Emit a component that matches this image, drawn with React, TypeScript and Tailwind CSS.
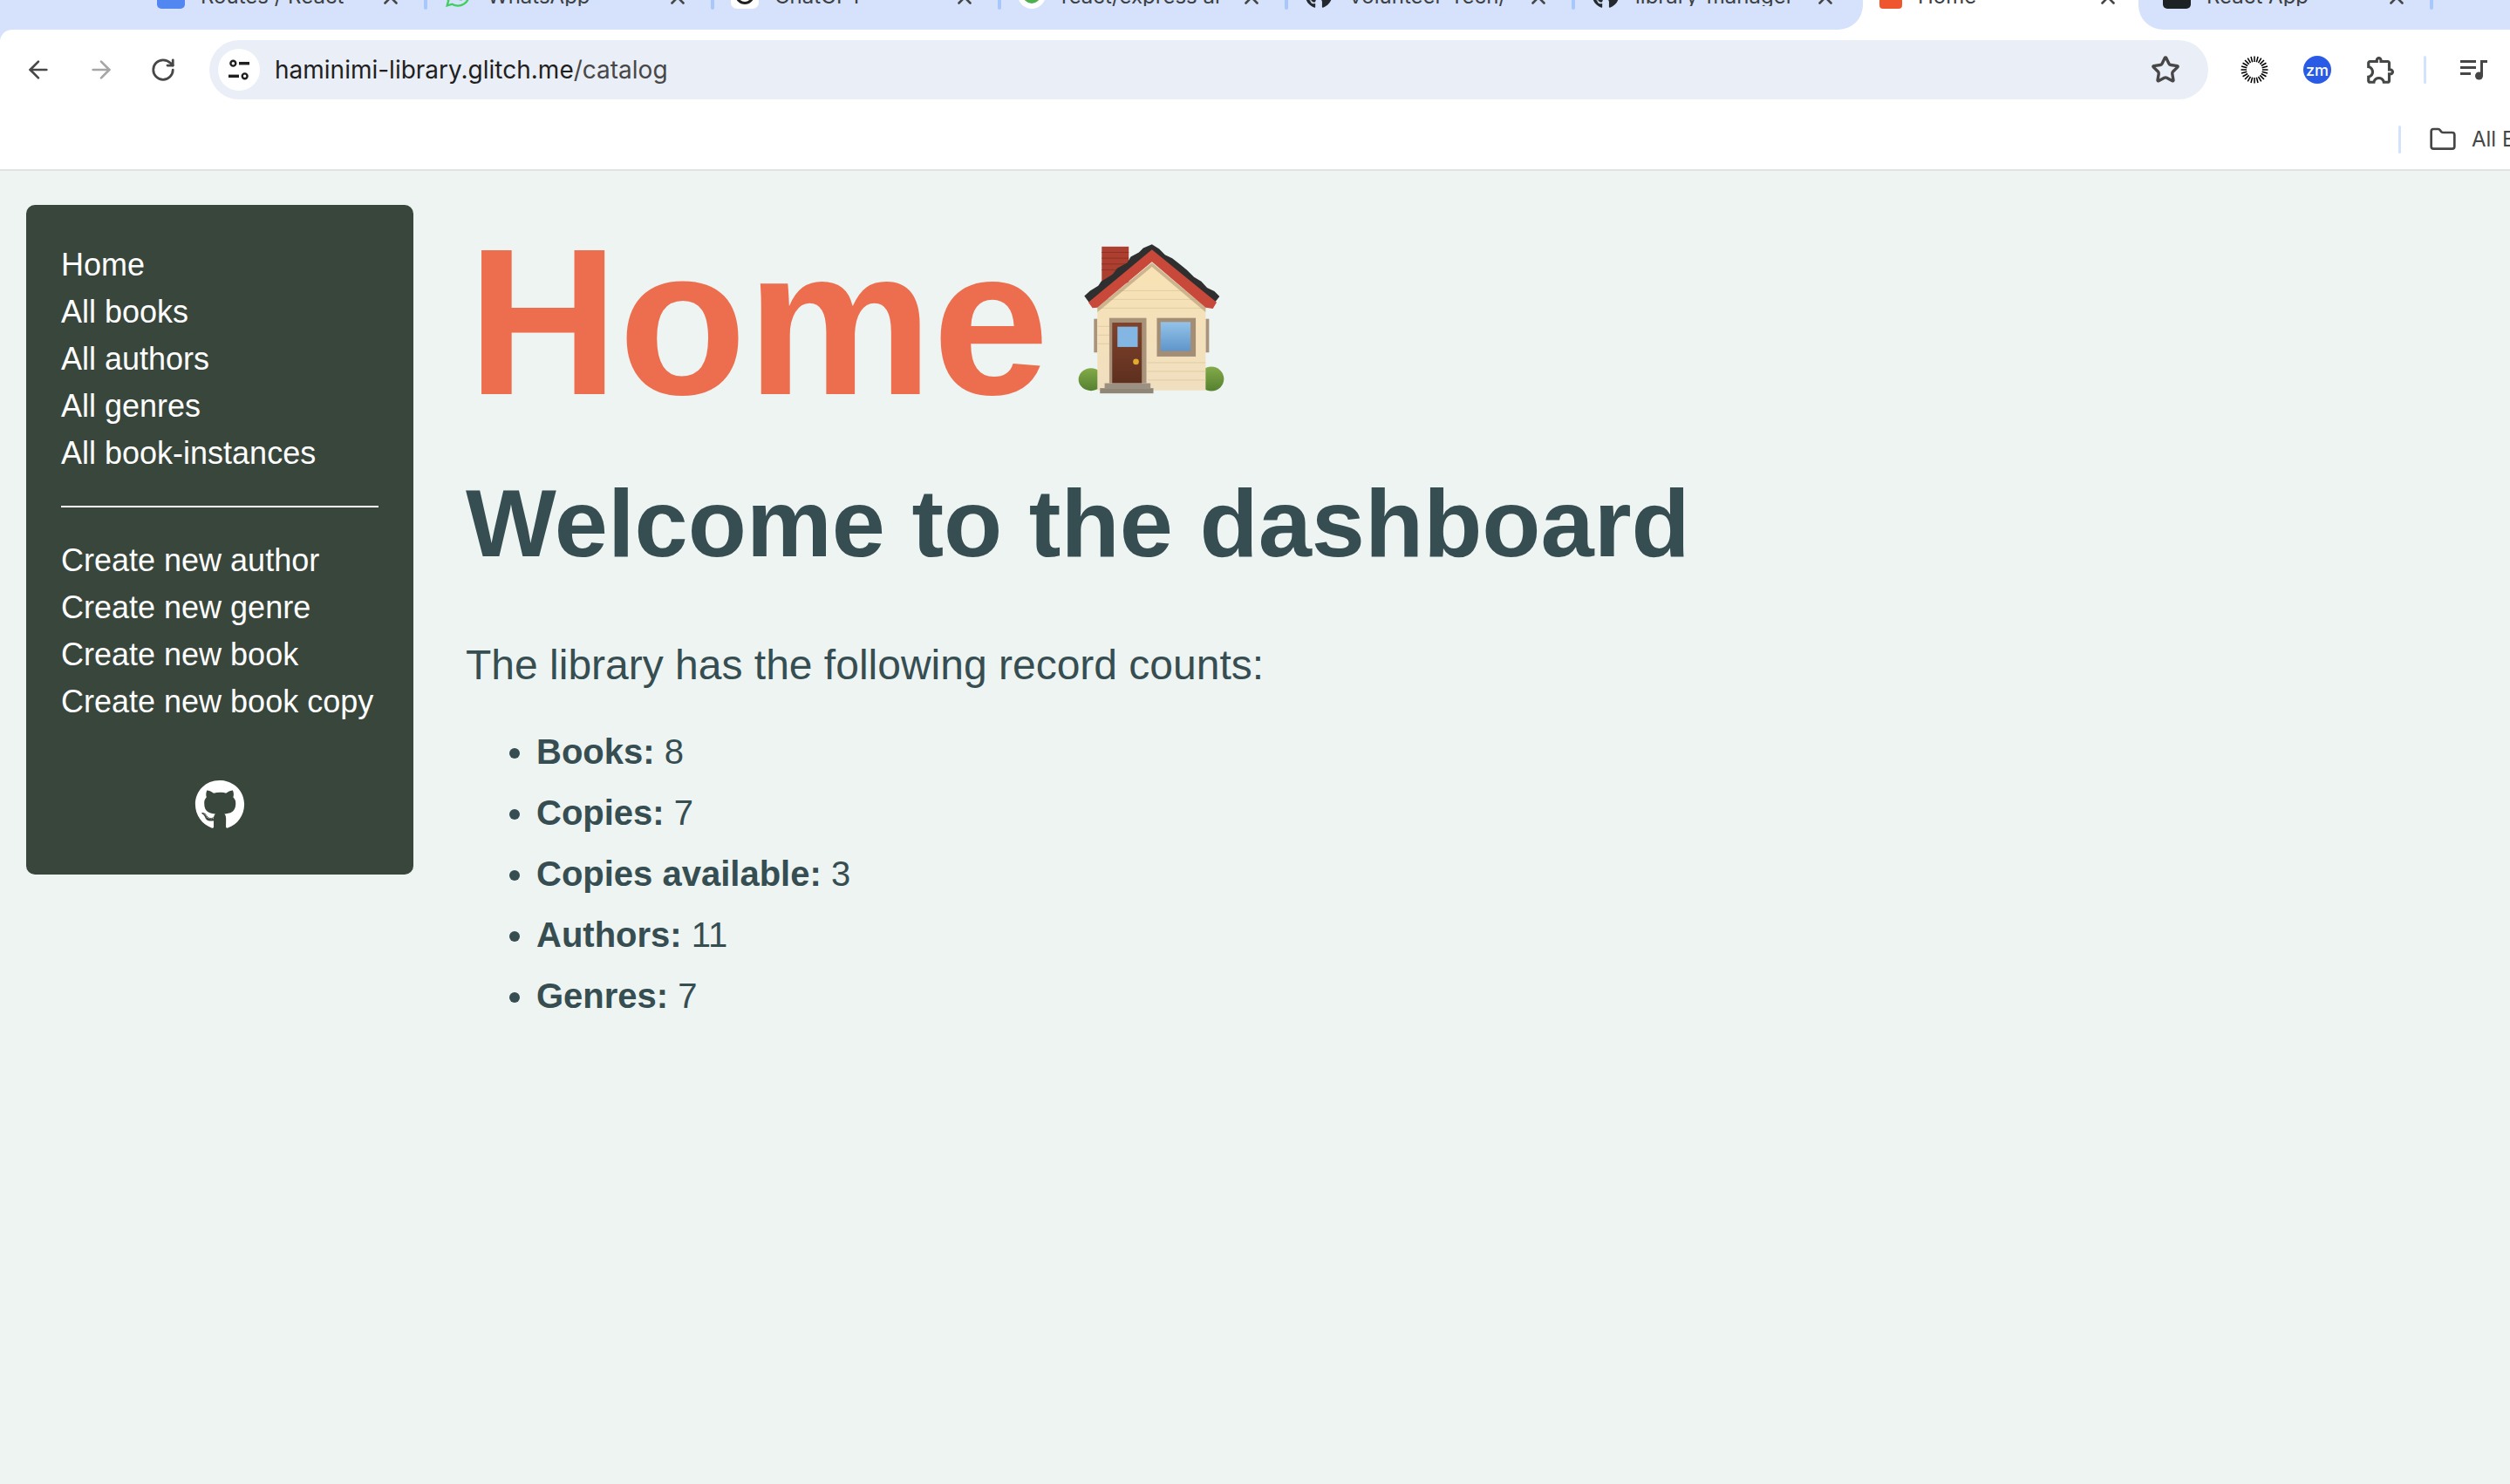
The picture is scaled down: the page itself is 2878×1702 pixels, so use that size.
import { ArrowLeft, ArrowRight, ChevronDown, Folder, RotateCw, Star, X } from "lucide-react";
import { FaGithub, FaWhatsapp } from "react-icons/fa";

const sans = "font-['Liberation_Sans',Arial,sans-serif]";
const ui = "font-['Inter','Liberation_Sans',sans-serif]";

const navMain = ["Home", "All books", "All authors", "All genres", "All book-instances"];
const navCreate = ["Create new author", "Create new genre", "Create new book", "Create new book copy"];

const counts = [
  { label: "Books:", value: 8 },
  { label: "Copies:", value: 7 },
  { label: "Copies available:", value: 3 },
  { label: "Authors:", value: 11 },
  { label: "Genres:", value: 7 },
];

function Favicon({ kind }: { kind: string }) {
  if (kind === "docs") return <div className="h-[32px] w-[32px] flex-none rounded-[5px] bg-[#5286f0]" />;
  if (kind === "whatsapp") return <FaWhatsapp className="h-[32px] w-[32px] flex-none text-[#3fcf5c]" />;
  if (kind === "chatgpt")
    return (
      <div className="flex h-[32px] w-[32px] flex-none items-center justify-center rounded-[7px] bg-white">
        <div className="h-[22px] w-[22px] rounded-full border-[3px] border-[#222]" />
      </div>
    );
  if (kind === "google")
    return (
      <div className="flex h-[32px] w-[32px] flex-none items-center justify-center rounded-full bg-white">
        <div className="h-[20px] w-[20px] rounded-full border-[5px] border-[#4caf50]" />
      </div>
    );
  if (kind === "github") return <FaGithub className="h-[32px] w-[32px] flex-none text-[#24292e]" />;
  if (kind === "home") return <div className="h-[32px] w-[26px] flex-none rounded-[4px] bg-[#ef5630]" />;
  return (
    <div className="flex h-[32px] w-[32px] flex-none items-center justify-center rounded-[5px] bg-[#1d2224]">
      <div className="h-[12px] w-[22px] rounded-full border-[2px] border-[#61dafb]" />
    </div>
  );
}

function Tab({ kind, title }: { kind: string; title: string }) {
  return (
    <div className="flex h-[11px] w-[325px] flex-none items-end overflow-hidden pl-[19px]">
      <div className="mb-[1px] flex flex-none items-end">
        <Favicon kind={kind} />
        <span className={`mb-[3px] ml-[18px] w-[205px] overflow-hidden text-[24px] leading-[22px] whitespace-nowrap text-[#3c4043] ${ui}`}>
          {title}
        </span>
        <X className="h-[26px] w-[26px] flex-none text-[#444746]" strokeWidth={2.4} />
      </div>
    </div>
  );
}

function Separator() {
  return <div className="h-[11px] w-[4px] flex-none rounded-b-[2px] bg-[#a8c7fa]" />;
}

function TuneIcon() {
  return (
    <svg viewBox="0 0 24 24" className="h-[32px] w-[32px] text-[#1f1f1f]" fill="none" stroke="currentColor">
      <circle cx="7" cy="6.5" r="2.2" strokeWidth="1.8" />
      <path d="M12 6.5h9" strokeWidth="2.6" />
      <path d="M3 17.5h9" strokeWidth="2.6" />
      <circle cx="17" cy="17.5" r="2.2" strokeWidth="1.8" />
    </svg>
  );
}

function SpokeIcon() {
  const spokes = Array.from({ length: 24 }, (_, i) => (i * 360) / 24);
  return (
    <svg viewBox="0 0 32 32" className="h-[32px] w-[32px]">
      {spokes.map((deg) => (
        <line key={deg} x1="16" y1="0.5" x2="16" y2="7" stroke="#000" strokeWidth="1.5" transform={`rotate(${deg} 16 16)`} />
      ))}
    </svg>
  );
}

function PuzzleIcon() {
  return (
    <svg viewBox="0 0 24 24" className="h-[38px] w-[38px] text-[#444746]" fill="currentColor">
      <path d="M10.5 4.5c.28 0 .5.22.5.5v2h6v6h2c.28 0 .5.22.5.5s-.22.5-.5.5h-2v6h-2.12c-.68-1.75-2.39-3-4.38-3s-3.7 1.25-4.38 3H4v-2.12c1.75-.68 3-2.39 3-4.38 0-1.99-1.24-3.7-2.99-4.38L4 7h6V5c0-.28.22-.5.5-.5m0-2C9.12 2.5 8 3.62 8 5H4c-1.1 0-1.99.9-1.99 2v3.8h.29c1.49 0 2.7 1.21 2.7 2.7s-1.21 2.7-2.7 2.7H2V20c0 1.1.9 2 2 2h3.8v-.3c0-1.49 1.21-2.7 2.7-2.7s2.7 1.21 2.7 2.7v.3H17c1.1 0 2-.9 2-2v-4c1.38 0 2.5-1.12 2.5-2.5S20.38 11 19 11V7c0-1.1-.9-2-2-2h-4c0-1.38-1.12-2.5-2.5-2.5z" />
    </svg>
  );
}

function QueueIcon() {
  return (
    <svg viewBox="0 0 32 24" className="h-[24px] w-[32px] text-[#444746]" fill="currentColor">
      <rect x="0" y="1" width="18" height="3" />
      <rect x="0" y="8" width="18" height="3" />
      <rect x="0" y="15" width="12" height="3" />
      <rect x="23" y="1" width="3" height="18" />
      <rect x="23" y="1" width="8" height="3" />
      <circle cx="21.5" cy="19" r="4.5" />
    </svg>
  );
}

function HouseEmoji() {
  return (
    <svg viewBox="80 60 505 520" className="h-[174px] w-[168px] flex-none">
      <defs>
        <linearGradient id="wall" x1="0" y1="0" x2="0" y2="1">
          <stop offset="0" stopColor="#f8e2b4" />
          <stop offset="1" stopColor="#f0dfc0" />
        </linearGradient>
        <linearGradient id="door" x1="0" y1="0" x2="0" y2="1">
          <stop offset="0" stopColor="#80432b" />
          <stop offset="1" stopColor="#5e2f1f" />
        </linearGradient>
        <linearGradient id="glass" x1="0" y1="0" x2="0" y2="1">
          <stop offset="0" stopColor="#93c3e9" />
          <stop offset="1" stopColor="#5f95ca" />
        </linearGradient>
        <linearGradient id="leaf" x1="0" y1="0" x2="0" y2="1">
          <stop offset="0" stopColor="#83ab4a" />
          <stop offset="1" stopColor="#55802f" />
        </linearGradient>
      </defs>
      <rect x="162" y="70" width="93" height="125" fill="#ad3f30" />
      <path d="M162 90h93M162 110h93M162 130h93M162 150h60" stroke="#8f3125" strokeWidth="3" />
      <path d="M102 240 L122 222 L150 205 L160 190 L200 165 L215 145 L250 125 L262 105 L290 90 L305 75 L335 62 L360 78 L380 98 L405 110 L430 130 L455 150 L480 175 L505 190 L525 212 L550 224 L568 242 L552 262 L335 100 L118 262 Z" fill="#2f2f2f" />
      <ellipse cx="125" cy="528" rx="43" ry="39" fill="url(#leaf)" />
      <ellipse cx="540" cy="526" rx="43" ry="42" fill="url(#leaf)" />
      <rect x="135" y="319" width="12" height="116" fill="#a9937a" />
      <rect x="520" y="319" width="12" height="116" fill="#a9937a" />
      <path d="M147 280 L335 125 L520 280 L520 566 L147 566 Z" fill="url(#wall)" />
      <path d="M215 222H455M180 252H490M148 282H520M148 345H188M148 375H188M148 405H188M320 470H520M320 500H520M320 530H520" stroke="#e2cda1" strokeWidth="3" />
      <path d="M147 280 L335 125 L520 280 L520 296 L335 140 L147 296 Z" fill="#a98f6d" opacity="0.55" />
      <path d="M116 262 L335 80 L558 262 L545 284 L520 280 L335 122 L147 280 L130 282 Z" fill="#c8483a" />
      <rect x="188" y="316" width="128" height="225" fill="#a8927a" />
      <rect x="198" y="332" width="102" height="209" fill="url(#door)" />
      <rect x="216" y="346" width="70" height="70" fill="#83b6e2" />
      <circle cx="280" cy="467" r="10" fill="#e2ab2d" />
      <rect x="352" y="316" width="134" height="133" fill="#a38d75" />
      <rect x="365" y="330" width="103" height="100" fill="url(#glass)" />
      <rect x="172" y="541" width="158" height="17" fill="#9b9082" />
      <rect x="156" y="558" width="184" height="18" fill="#8f8678" />
    </svg>
  );
}

export default function App() {
  return (
    <div className={`flex h-[1702px] w-[2878px] flex-col overflow-hidden bg-[#eef4f2] ${sans}`}>
      {/* browser chrome */}
      <div className="flex-none bg-[#d6e2fb]">
        <div className="flex h-[34px] overflow-hidden bg-white">
          <div className="flex h-full w-[2136px] flex-none items-start rounded-br-[28px] bg-[#d6e2fb] pl-[161px]">
            <Tab kind="docs" title="Routes / React" />
            <Separator />
            <Tab kind="whatsapp" title="WhatsApp" />
            <Separator />
            <Tab kind="chatgpt" title="ChatGPT" />
            <Separator />
            <Tab kind="google" title="react/express ar" />
            <Separator />
            <Tab kind="github" title="Volunteer-Tech/" />
            <Separator />
            <Tab kind="github" title="library-manager" />
          </div>
          <div className="flex h-full w-[316px] flex-none items-start">
            <Tab kind="home" title="Home" />
          </div>
          <div className="flex h-full flex-1 items-start rounded-bl-[28px] bg-[#d6e2fb] pl-[9px]">
            <Tab kind="react" title="React App" />
            <Separator />
            <div className="ml-[18px] flex h-[5px] items-end overflow-hidden">
              <ChevronDown className="h-[28px] w-[28px] flex-none text-[#444746]" strokeWidth={2.4} />
            </div>
          </div>
        </div>

        <div className="h-[162px] rounded-tl-[14px] border-b-2 border-[#e0e3e3] bg-white">
          <div className="flex h-[92px] items-center pl-[28px]">
            <ArrowLeft className="h-[32px] w-[32px] text-[#474747]" strokeWidth={2} />
            <ArrowRight className="ml-[40px] h-[32px] w-[32px] text-[#a6a6a6]" strokeWidth={2} />
            <RotateCw className="ml-[40px] h-[30px] w-[30px] text-[#474747]" strokeWidth={2.2} />
            <div className="ml-[38px] flex h-[68px] w-[2292px] flex-none items-center rounded-full bg-[#eaeef7] pr-[32px] pl-[10px]">
              <div className="flex h-[48px] w-[48px] items-center justify-center rounded-full bg-white">
                <TuneIcon />
              </div>
              <span className={`ml-[17px] text-[28px] text-[#1f1f1f] ${ui}`}>
                haminimi-library.glitch.me<span className="text-[#474747]">/catalog</span>
              </span>
              <Star className="ml-auto h-[34px] w-[34px] text-[#474747]" strokeWidth={2.4} />
            </div>
            <div className="ml-[37px]"><SpokeIcon /></div>
            <div className={`ml-[40px] flex h-[32px] w-[32px] items-center justify-center rounded-full bg-[#2a5be6] text-[18px] font-medium text-white ${ui}`}>
              zm
            </div>
            <div className="ml-[38px]"><PuzzleIcon /></div>
            <div className="ml-[30px] h-[32px] w-[3px] rounded-full bg-[#d3e3fd]" />
            <div className="ml-[39px]"><QueueIcon /></div>
          </div>
          <div className="flex h-[68px] items-center justify-end">
            <div className="h-[32px] w-[3px] rounded-full bg-[#d3e3fd]" />
            <div className="ml-[32px] flex w-[93px] items-center overflow-hidden">
              <Folder className="h-[32px] w-[32px] flex-none text-[#444746]" strokeWidth={2} />
              <span className={`ml-[17px] text-[24px] whitespace-nowrap text-[#444746] ${ui}`}>All Bookmarks</span>
            </div>
          </div>
        </div>
      </div>

      {/* page */}
      <div className="flex items-start pt-[39px] pl-[30px]">
        <aside className="flex h-[768px] w-[444px] flex-none flex-col rounded-[10px] bg-[#38463c] px-[40px] pt-[42px] text-[36px] leading-[54px] text-white">
          <ul>
            {navMain.map((item) => (
              <li key={item}>{item}</li>
            ))}
          </ul>
          <hr className="mt-[33px] mb-[34px] border-t-2 border-white" />
          <ul>
            {navCreate.map((item) => (
              <li key={item} className="whitespace-nowrap">{item}</li>
            ))}
          </ul>
          <div className="mt-[62px] flex justify-center">
            <FaGithub className="h-[58px] w-[58px] text-white" />
          </div>
        </aside>

        <main className="ml-[60px] text-[#364e51]">
          <div className="flex h-[274px] items-end">
            <h1 className="pl-[2px] text-[240px] leading-[280px] font-bold text-[#ec6e4e]">Home</h1>
            <div className="mb-[56px] ml-[33px]"><HouseEmoji /></div>
          </div>
          <h2 className="mt-[26px] text-[110px] leading-[130px] font-bold">Welcome to the dashboard</h2>
          <p className="mt-[68px] text-[48px] leading-[60px]">The library has the following record counts:</p>
          <ul className="mt-[34px] list-disc pl-[81px] text-[40px] leading-[70px] marker:text-[#364e51]">
            {counts.map((c) => (
              <li key={c.label}>
                <strong className="font-bold">{c.label}</strong> {c.value}
              </li>
            ))}
          </ul>
        </main>
      </div>
    </div>
  );
}
